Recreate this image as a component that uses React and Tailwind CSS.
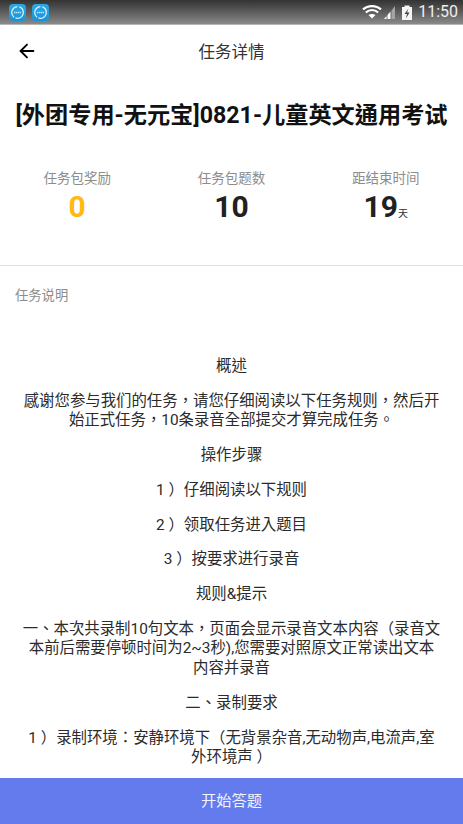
import React from "react";
import { ArrowLeft } from "lucide-react";

const stats = [
    { label: "任务包奖励", value: "0", color: "text-[#ffb90f]" },
    { label: "任务包题数", value: "10", color: "text-[#212121]" },
    { label: "距结束时间", value: "19", color: "text-[#212121]", unit: "天" },
];

function AppIcon() {
    return (
        <div className="w-[17px] h-[17px] rounded-[4px] bg-gradient-to-b from-[#2aa9e4] to-[#1a93d6] flex items-center justify-center">
            <svg width="15" height="15" viewBox="0 0 15 15" fill="none">
                <circle cx="7.5" cy="7.5" r="5.8" stroke="#d8f1fb" strokeWidth="1.3" strokeDasharray="11 1.5 14 2" />
                <path d="M4 7.5h7" stroke="#bfe6f6" strokeWidth="1.6" strokeDasharray="1.4 0.5" />
            </svg>
        </div>
    );
}

function StatusBar() {
    return (
        <div className="h-[25px] shrink-0 flex items-center justify-between pl-[9px] pr-[5px] bg-gradient-to-b from-[#333333] to-[#8a8a8a] border-b border-[#b5b5b5]">
            <div className="flex gap-[6px]">
                <AppIcon />
                <AppIcon />
            </div>
            <div className="flex items-center">
                <svg width="20" height="14" viewBox="0 0 20 14" fill="none" stroke="#ffffff" strokeWidth="2.2">
                    <path d="M1 4.500C6 0 14 0 19 4.500" />
                    <path d="M3.800 7.500C7.500 4.300 12.500 4.300 16.200 7.500" />
                    <path d="M10 13.500 6.500 10C8.500 8.600 11.500 8.600 13.500 10z" fill="#ffffff" stroke="none" />
                </svg>
                <svg width="13" height="14" viewBox="0 0 13 14" className="ml-[1px]">
                    <path d="M1 14h2.500v-3z" fill="#ffffff" />
                    <path d="M4.500 14h3V6.500L4.500 10z" fill="#ffffff" />
                    <path d="M8.500 14h3.500V1L8.500 5.500z" fill="#a3a3a3" />
                </svg>
                <svg width="10" height="15" viewBox="0 0 10 15" className="ml-[6px]">
                    <path d="M0 2h2.500V0.500h5V2H10v13H0z" fill="#f5f5f5" />
                    <path d="M6.500 3.500 2.500 9H5l-1 4.500L7.500 7.500H5z" fill="#444444" />
                </svg>
                <span className="ml-[6px] text-[16px] leading-none text-[#eeeeee] [font-family:Roboto,sans-serif]">11:50</span>
            </div>
        </div>
    );
}

function App() {
    return (
        <div lang="zh-TW" className="w-[463px] h-[824px] overflow-hidden bg-white flex flex-col [font-family:Roboto,'Noto_Sans_CJK_TC',sans-serif]">
            <StatusBar />

            <div className="h-[54px] shrink-0 relative flex items-center justify-center pt-[3px]">
                <ArrowLeft className="absolute left-[16px] top-[15px] text-black" size={22} strokeWidth={2} />
                <span className="text-[16.5px] text-[#333333]">任务详情</span>
            </div>

            <h1 className="mt-[22px] text-center text-[23.2px] leading-7 font-bold text-[#111111] whitespace-nowrap">
                [外团专用-无元宝]0821-儿童英文通用考试
            </h1>

            <div className="mt-[40px] grid grid-cols-3">
                {stats.map((stat) => (
                    <div key={stat.label} className="flex flex-col items-center">
                        <span className="text-[13.5px] leading-[18px] text-[#8c8c8c]">{stat.label}</span>
                        <div className="mt-[4px] flex items-baseline leading-8">
                            <span className={`text-[30px] font-bold ${stat.color}`}>{stat.value}</span>
                            {stat.unit && <span className="text-[10px] text-[#333333]">{stat.unit}</span>}
                        </div>
                    </div>
                ))}
            </div>

            <div className="mt-[35px] border-t border-[#e3e3e3]" />

            <div className="mt-[21px] px-[15px] text-[13.3px] leading-[18px] text-[#8c8c8c]">任务说明</div>

            <div className="flex-1 min-h-0 overflow-hidden mt-[52px] px-[22.5px] text-center text-[15.4px] leading-[19.8px] text-[#2b2b2b] flex flex-col gap-[14.9px]">
                <p>概述</p>
                <p>感谢您参与我们的任务，请您仔细阅读以下任务规则，然后开始正式任务，10条录音全部提交才算完成任务。</p>
                <p>操作步骤</p>
                <p>1 ）仔细阅读以下规则</p>
                <p>2 ）领取任务进入题目</p>
                <p>3 ）按要求进行录音</p>
                <p>规则&amp;提示</p>
                <p>一、本次共录制10句文本，页面会显示录音文本内容（录音文本前后需要停顿时间为2~3秒),您需要对照原文正常读出文本内容并录音</p>
                <p>二、录制要求</p>
                <p>1 ）录制环境：安静环境下（无背景杂音,无动物声,电流声,室外环境声 ）</p>
            </div>

            <button className="h-[46px] shrink-0 bg-[#637bec] text-[15.3px] text-[#f2f4fe]">开始答题</button>
        </div>
    );
}

export default App;
